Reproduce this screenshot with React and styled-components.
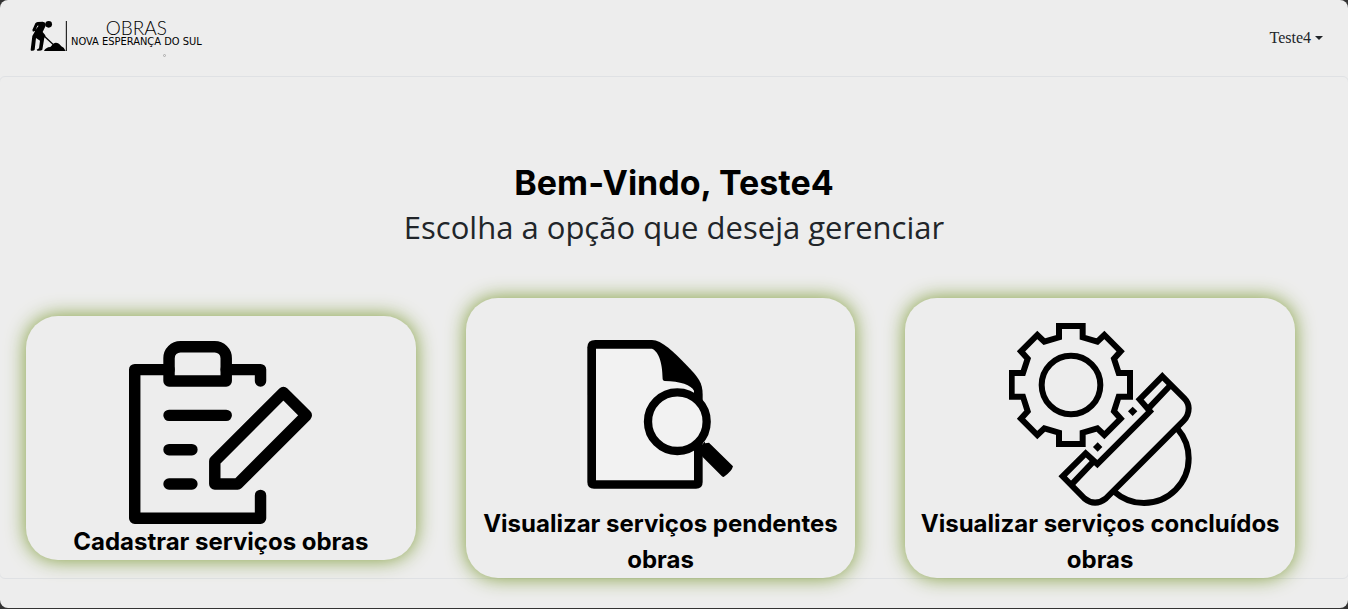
import React from "react";
import styled, { createGlobalStyle } from "styled-components";

const GlobalStyle = createGlobalStyle`
  *, *::before, *::after { box-sizing: border-box; }
  body {
    margin: 0;
    background: #333333;
    font-family: Inter, "Liberation Sans", sans-serif;
    color: #000000;
  }
`;

const Page = styled.div`
  display: flex;
  flex-direction: column;
  min-height: calc(100vh - 1px);
  overflow: hidden;
  background: #ededed;
  border-radius: 8px;
`;

const Header = styled.header`
  display: flex;
  align-items: center;
  justify-content: space-between;
  height: 76px;
  padding: 0 25px 0 30px;
`;

const Brand = styled.a`
  display: flex;
  align-items: flex-start;
  gap: 3px;
  color: #000000;
  text-decoration: none;
`;

const BrandMark = styled.svg`
  width: 38px;
  height: 32px;
`;

const BrandText = styled.span`
  display: flex;
  flex-direction: column;
  align-items: center;
`;

const BrandName = styled.span`
  font: 300 19px/16px Lato, sans-serif;
`;

const BrandCity = styled.span`
  font: 400 11px/12px "DejaVu Sans Condensed", sans-serif;
  white-space: nowrap;
`;

const BrandDot = styled.svg`
  width: 3px;
  height: 3px;
  margin: 6px 0 0 56px;
`;

const UserMenu = styled.button`
  display: flex;
  align-items: center;
  gap: 4px;
  padding: 0;
  border: 0;
  background: none;
  color: #212529;
  font: 400 16px/24px "Liberation Serif", serif;
  cursor: pointer;
`;

const Caret = styled.span`
  border: 4px solid transparent;
  border-top-color: currentColor;
  border-bottom: 0;
`;

const Panel = styled.main`
  margin: 0 -1px;
  padding: 84px 53px 0 26px;
  border: 1px solid #dfe1e4;
  border-radius: 6px;
`;

const Intro = styled.div`
  padding-left: 27px;
  margin-bottom: 49px;
  text-align: center;
`;

const Title = styled.h1`
  margin: 0;
  font-size: 34px;
  line-height: 44px;
  font-weight: 700;
`;

const Subtitle = styled.h2`
  margin: 0;
  color: #212529;
  font: 400 31px/44px "Open Sans", "Noto Sans", sans-serif;
`;

const Cards = styled.nav`
  display: grid;
  grid-template-columns: repeat(3, 1fr);
  align-items: center;
  gap: 50px;
`;

const Card = styled.a`
  display: flex;
  flex-direction: column;
  align-items: center;
  padding: 25px 10px 0;
  border-radius: 32px;
  background: #ededed;
  box-shadow: 0 0 20px #819d3a;
  color: #000000;
  text-decoration: none;
`;

const CardIcon = styled.svg`
  width: 183px;
  height: 183px;
`;

const CardLabel = styled.span`
  font-size: 24px;
  line-height: 36px;
  font-weight: 700;
  text-align: center;
`;

function WorkerMark() {
  return (
    <BrandMark viewBox="90 60 114 96" aria-hidden="true">
      <circle cx="146" cy="73" r="10" />
      <path d="M106 70Q108 67 113 66L128 65Q139 66 137 77L128 96L136 106Q137 111 133 113L127 149Q124 153 112 152L110 149L117 145L120 122L108 114L104 149Q102 153 93 152L92 149L97 108L110 85L116 77L112 77L106 92L99 95L97 90Z" />
      <path d="M122 98L162 136" stroke="#000" strokeWidth="4" />
      <path d="M132 153Q137 142 151 141L160 131Q167 126 177 131L184 139L191 143L197 153Z" />
      <path d="M199 63V153" stroke="#000" strokeWidth="3" />
    </BrandMark>
  );
}

function ClipboardIcon() {
  return (
    <CardIcon
      viewBox="0 0 16 16"
      fill="none"
      stroke="#000"
      strokeWidth="1"
      strokeLinecap="round"
      strokeLinejoin="round"
      aria-hidden="true"
    >
      <path d="M3.5 2.5H.5V15.5H11.5V13.5M8.5 2.5H11.5V3.5" />
      <path d="M3.5 3.5V1.5A1 1 0 0 1 4.5 .5H7.5A1 1 0 0 1 8.5 1.5V3.5Z" />
      <path d="M3.5 6.5H8.5M3.5 9.5H5.5M3.5 12.5H5.5" />
      <path d="M7.5 12.5H9.5L15.5 6.5L13.5 4.5L7.5 10.5Z" />
    </CardIcon>
  );
}

function DocumentSearchIcon() {
  return (
    <CardIcon viewBox="-3 -21 549 549" aria-hidden="true">
      <path d="M76 30H246C275 30 310 65 350 106C385 142 398 158 398 195V456Q398 476 378 476H72Q52 476 52 456V52Q52 30 76 30Z" />
      <path fill="#f2f2f2" d="M78 56H246C262 62 278 90 278 148Q279 153 284 153C330 153 365 166 372 182V451H78Z" />
      <path d="M385 362L404 334L405 340L417 338L489 409Q486 424 461 441Q458 441 455 438L398 381Z" />
      <circle cx="322" cy="275" r="88" fill="#f2f2f2" stroke="#000" strokeWidth="25" />
    </CardIcon>
  );
}

function GearHelmetIcon() {
  return (
    <CardIcon viewBox="27 24 549 549" fill="none" stroke="#000" strokeWidth="18" aria-hidden="true">
      <path d="M177 33H248V67L292 80L313 60L362 109L342 131L356 174H390V245H356L342 289L362 311L313 360L292 340L248 353V387H177V353L133 340L112 360L63 311L83 289L69 245H35V174H69L83 131L63 109L112 60L133 80L177 67Z" />
      <circle cx="213" cy="210" r="88" />
      <path d="M487 184L553 250Q566 263 566 280Q566 302 551 317L318 550Q285 576 253 550L188 484L257 415L292 447L450 289L419 253Z" />
      <path d="M442 284L512 210M215 508L280 440" />
      <path d="M533 342A134 134 0 0 1 566 430A134 134 0 0 1 432 564A134 134 0 0 1 343 530" />
      <path d="M391 282L405 296M286 389L300 403" strokeWidth="20" />
    </CardIcon>
  );
}

const options = [
  { label: "Cadastrar serviços obras", Icon: ClipboardIcon },
  { label: "Visualizar serviços pendentes obras", Icon: DocumentSearchIcon },
  { label: "Visualizar serviços concluídos obras", Icon: GearHelmetIcon },
];

export default function App() {
  return (
    <>
      <GlobalStyle />
      <Page>
        <Header>
          <Brand href="#">
            <WorkerMark />
            <BrandText>
              <BrandName>OBRAS</BrandName>
              <BrandCity>NOVA ESPERANÇA DO SUL</BrandCity>
              <BrandDot viewBox="0 0 3 3" fill="none" stroke="#aaa" aria-hidden="true">
                <circle cx="1.5" cy="1.5" r="1" />
              </BrandDot>
            </BrandText>
          </Brand>
          <UserMenu type="button" aria-haspopup="menu">
            Teste4
            <Caret />
          </UserMenu>
        </Header>
        <Panel>
          <Intro>
            <Title>Bem-Vindo, Teste4</Title>
            <Subtitle>Escolha a opção que deseja gerenciar</Subtitle>
          </Intro>
          <Cards>
            {options.map(({ label, Icon }) => (
              <Card href="#" key={label}>
                <Icon />
                <CardLabel>{label}</CardLabel>
              </Card>
            ))}
          </Cards>
        </Panel>
      </Page>
    </>
  );
}
